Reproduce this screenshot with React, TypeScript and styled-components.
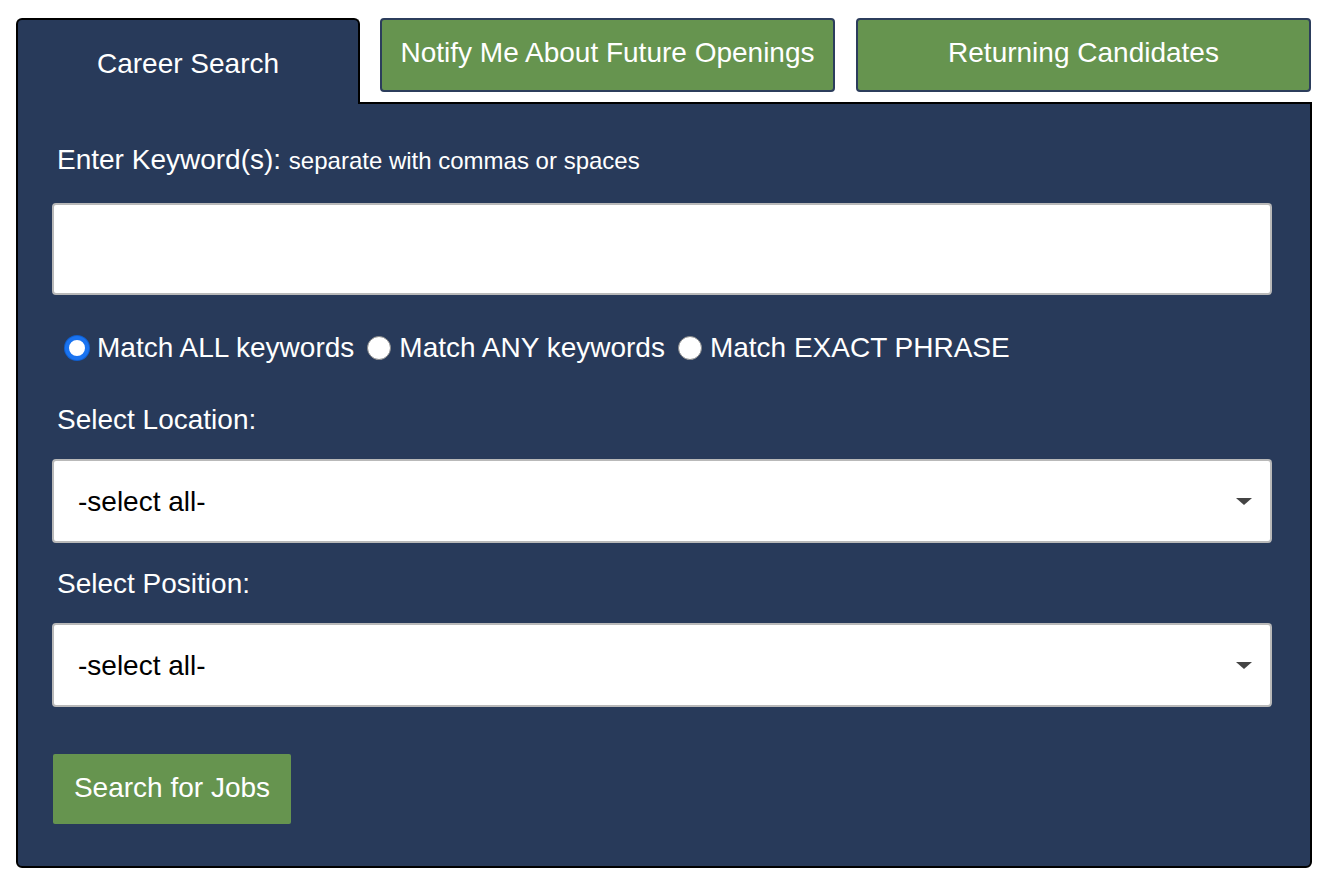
import React, { useState } from "react";
import styled, { createGlobalStyle } from "styled-components";

const GlobalStyle = createGlobalStyle`
  body {
    margin: 0;
    background: #ffffff;
    font-family: "Liberation Sans", Arial, sans-serif;
  }
`;

const NAVY = "#283a5a";
const GREEN = "#66944f";

const Page = styled.div`
  padding: 18px 16px 0 16px;
  width: 1296px;
`;

const TabRow = styled.div`
  display: flex;
  align-items: flex-start;
`;

const ActiveTab = styled.div`
  position: relative;
  z-index: 1;
  width: 344px;
  height: 86px;
  margin-bottom: -2px;
  box-sizing: border-box;
  padding-top: 28px;
  background: ${NAVY};
  border: 2px solid #000;
  border-bottom: none;
  border-radius: 6px 6px 0 0;
  color: #fff;
  font-size: 28px;
  line-height: 32px;
  text-align: center;
`;

const LinkTab = styled.button<{ $gap: number }>`
  width: 455px;
  height: 74px;
  margin-left: ${(p) => p.$gap}px;
  background: ${GREEN};
  border: 2px solid #2c3d5c;
  border-radius: 4px;
  color: #fff;
  font-family: inherit;
  font-size: 28px;
  line-height: 32px;
  padding: 0 0 4px;
  cursor: pointer;
`;

const Panel = styled.div`
  background: ${NAVY};
  border: 2px solid #000;
  border-radius: 0 0 6px 6px;
  padding: 40px 38px 42px 34px;
  color: #fff;
`;

const Label = styled.div<{ $top: number }>`
  margin: ${(p) => p.$top}px 0 0 5px;
  font-size: 28px;
  line-height: 32px;
`;

const Hint = styled.span`
  font-size: 24px;
`;

const TextBox = styled.input`
  display: block;
  box-sizing: border-box;
  width: 100%;
  height: 92px;
  margin-top: 26px;
  border: 2px solid #b9b9b9;
  border-radius: 4px;
  background: #fff;
  font-family: inherit;
  font-size: 28px;
  padding: 0 24px;
  outline: none;
`;

const RadioRow = styled.div`
  display: flex;
  align-items: center;
  gap: 13px;
  margin: 37px 0 0 13px;
  font-size: 28px;
  line-height: 32px;
`;

const RadioOption = styled.label`
  display: inline-flex;
  align-items: center;
  gap: 8px;
  cursor: pointer;
`;

const RadioInput = styled.input`
  appearance: none;
  margin: 0;
  width: 24px;
  height: 24px;
  border-radius: 50%;
  background: #fff;
  border: 1px solid #8a8a8a;
  box-sizing: border-box;
  cursor: pointer;
  &:checked {
    border: 4px solid #1a73f0;
    box-shadow: 0 0 0 1px #0f5fd0;
  }
`;

const SelectWrap = styled.div<{ $top: number }>`
  position: relative;
  margin-top: ${(p) => p.$top}px;
`;

const Select = styled.select`
  display: block;
  width: 100%;
  height: 84px;
  appearance: none;
  box-sizing: border-box;
  border: 2px solid #b9b9b9;
  border-radius: 4px;
  background: #fff;
  color: #000;
  font-family: inherit;
  font-size: 28px;
  padding: 0 60px 0 24px;
  outline: none;
`;

const Caret = styled.span`
  position: absolute;
  right: 20px;
  top: 39px;
  width: 0;
  height: 0;
  border-left: 8px solid transparent;
  border-right: 8px solid transparent;
  border-top: 7px solid #444;
  pointer-events: none;
`;

const SearchButton = styled.button`
  display: block;
  margin-top: 47px;
  margin-left: 1px;
  width: 238px;
  height: 70px;
  background: ${GREEN};
  border: none;
  border-radius: 2px;
  color: #fff;
  font-family: inherit;
  font-size: 28px;
  padding: 0 0 2px;
  cursor: pointer;
`;

const matchOptions = [
  { value: "all", label: "Match ALL keywords" },
  { value: "any", label: "Match ANY keywords" },
  { value: "exact", label: "Match EXACT PHRASE" },
];

const App: React.FC = () => {
  const [match, setMatch] = useState("all");

  return (
    <Page>
      <GlobalStyle />
      <TabRow>
        <ActiveTab>Career Search</ActiveTab>
        <LinkTab $gap={20}>Notify Me About Future Openings</LinkTab>
        <LinkTab $gap={21}>Returning Candidates</LinkTab>
      </TabRow>
      <Panel>
        <Label $top={0}>
          Enter Keyword(s): <Hint>separate with commas or spaces</Hint>
        </Label>
        <TextBox type="text" />
        <RadioRow>
          {matchOptions.map((o) => (
            <RadioOption key={o.value}>
              <RadioInput
                type="radio"
                name="match"
                checked={match === o.value}
                onChange={() => setMatch(o.value)}
              />
              {o.label}
            </RadioOption>
          ))}
        </RadioRow>
        <Label $top={40}>Select Location:</Label>
        <SelectWrap $top={23}>
          <Select defaultValue="">
            <option value="">-select all-</option>
          </Select>
          <Caret />
        </SelectWrap>
        <Label $top={25}>Select Position:</Label>
        <SelectWrap $top={23}>
          <Select defaultValue="">
            <option value="">-select all-</option>
          </Select>
          <Caret />
        </SelectWrap>
        <SearchButton>Search for Jobs</SearchButton>
      </Panel>
    </Page>
  );
};

export default App;
